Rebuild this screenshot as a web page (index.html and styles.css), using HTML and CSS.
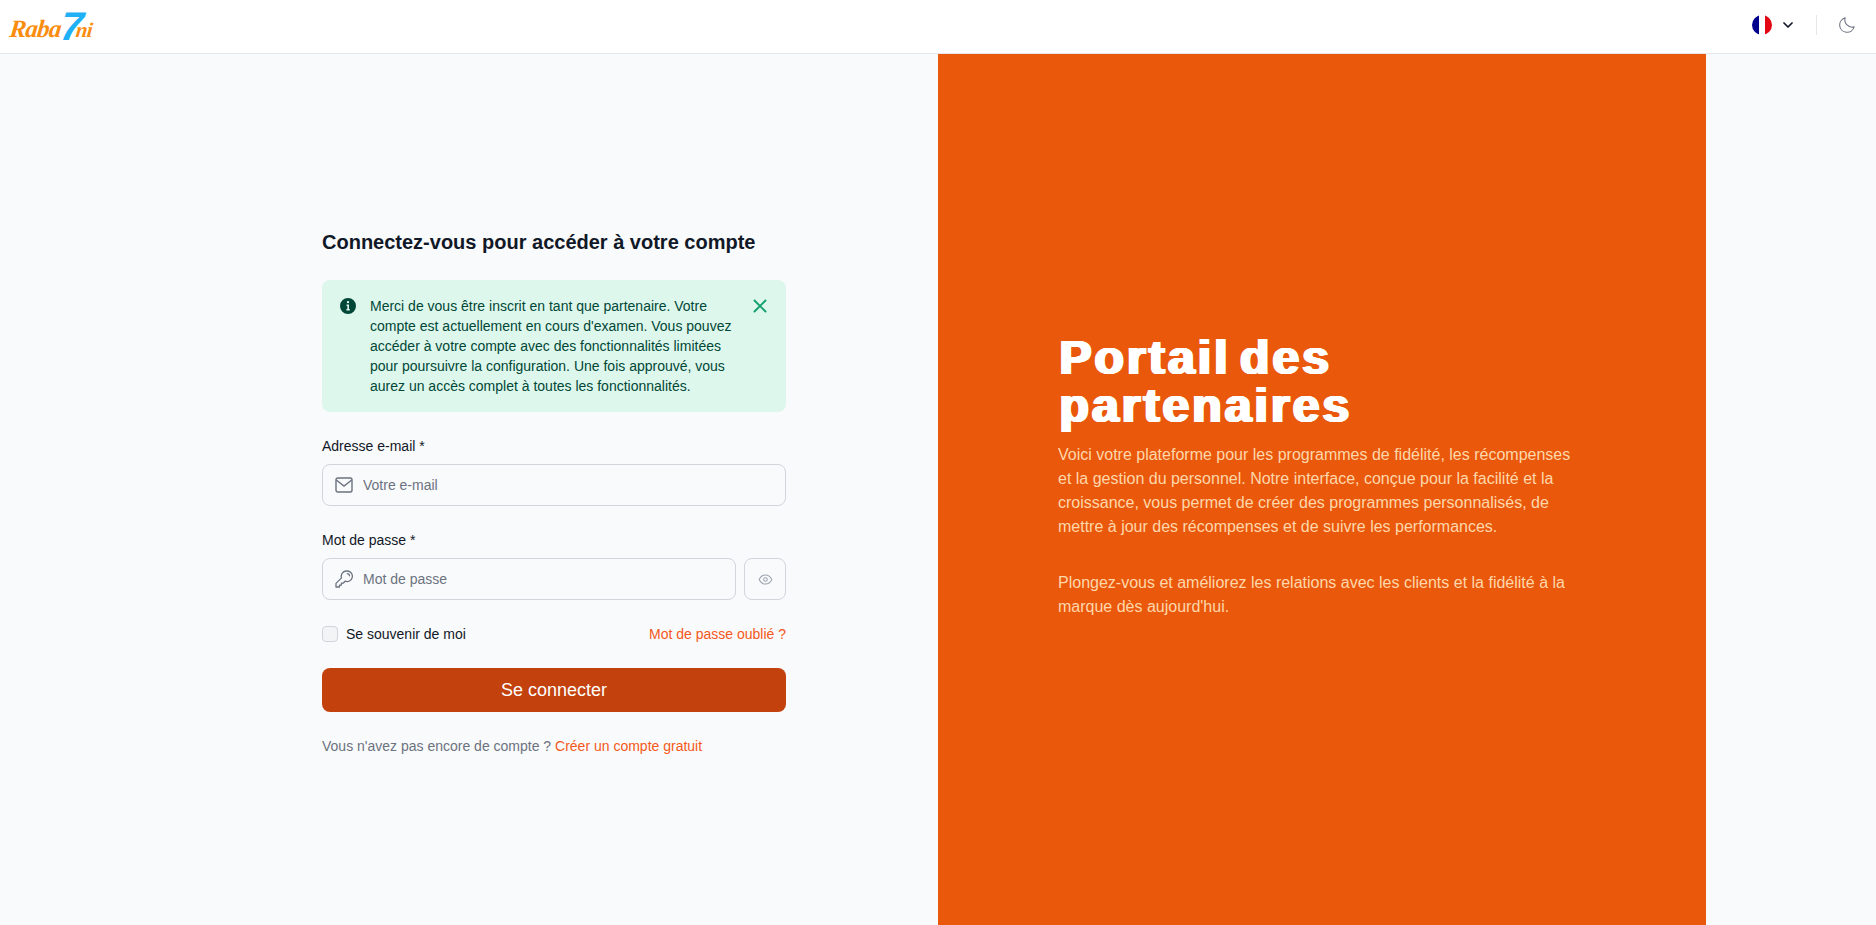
FILE: index.html
```html
<!DOCTYPE html>
<html lang="fr">
<head>
<meta charset="utf-8">
<title>Portail des partenaires</title>
<link rel="stylesheet" href="styles.css">
</head>
<body>
<header class="topbar">
  <a class="logo" href="#"><span class="logo-word">Raba</span><span class="logo-seven">7</span><span class="logo-end">ni</span></a>
  <div class="top-actions">
    <button class="lang" type="button" aria-label="Langue">
      <svg class="flag" viewBox="0 0 20 20" width="20" height="20"><defs><clipPath id="fc"><circle cx="10" cy="10" r="10"/></clipPath></defs><g clip-path="url(#fc)"><rect width="7" height="20" fill="#00008f"/><rect x="7" width="6" height="20" fill="#fff"/><rect x="13" width="7" height="20" fill="#e30613"/></g></svg>
      <svg class="chev" viewBox="0 0 10 6" width="10" height="6"><path d="M1 1l4 4 4-4" fill="none" stroke="#111827" stroke-width="1.7" stroke-linecap="round" stroke-linejoin="round"/></svg>
    </button>
    <span class="divider"></span>
    <svg class="moon" viewBox="0 0 24 24" width="18" height="18"><path d="M21.500 14.500A9.800 9.800 0 0 1 9.500 2.500a9.800 9.800 0 1 0 12 12z" fill="none" stroke="#6b7280" stroke-width="1.400" stroke-linejoin="round"/></svg>
  </div>
</header>
<main class="layout">
  <section class="login">
    <form class="form">
      <h1 class="form-title">Connectez-vous pour accéder à votre compte</h1>
      <div class="alert">
        <svg class="alert-icon" viewBox="0 0 20 20" width="16" height="16"><path fill="#014737" d="M10 0a10 10 0 1 0 0 20 10 10 0 0 0 0-20zM10 3.600a1.500 1.500 0 1 1 0 3 1.500 1.500 0 0 1 0-3zM12.200 15.600H8v-1.700h1.200v-4H8.200V8.200h3v5.700h1z"/></svg>
        <p class="alert-text">Merci de vous être inscrit en tant que partenaire. Votre compte est actuellement en cours d'examen. Vous pouvez accéder à votre compte avec des fonctionnalités limitées pour poursuivre la configuration. Une fois approuvé, vous aurez un accès complet à toutes les fonctionnalités.</p>
        <svg class="alert-close" viewBox="0 0 14 14" width="14" height="14"><path d="M1.500 1.500l11 11M12.500 1.500l-11 11" fill="none" stroke="#0e9f6e" stroke-width="1.900" stroke-linecap="round"/></svg>
      </div>
      <label class="label" for="email">Adresse e-mail *</label>
      <div class="field">
        <svg class="field-icon" viewBox="0 0 18 16" width="18" height="16"><rect x="1" y="1" width="16" height="14" rx="1.800" fill="none" stroke="#6b7280" stroke-width="1.400"/><path d="M1.300 3L9 9l7.700-6" fill="none" stroke="#6b7280" stroke-width="1.400"/></svg>
        <input class="input" id="email" type="text" placeholder="Votre e-mail">
      </div>
      <label class="label label-pass" for="pass">Mot de passe *</label>
      <div class="pass-row">
        <div class="field field-grow">
          <svg class="field-icon" viewBox="0 0 18 18" width="18" height="18"><path d="M11.600 1a5.300 5.300 0 0 0-5.100 6.900L1 13.400V17h3.500v-1.900h1.900v-1.900h1.800l1.900-2a5.300 5.300 0 1 0 2.500-10.200z" fill="none" stroke="#6b7280" stroke-width="1.300" stroke-linejoin="round"/><path d="M12.300 3.600a2.200 2.200 0 0 1 2.200 2.200" fill="none" stroke="#6b7280" stroke-width="1.300" stroke-linecap="round"/></svg>
          <input class="input" id="pass" type="password" placeholder="Mot de passe">
        </div>
        <button class="eye" type="button" aria-label="Afficher">
          <svg viewBox="0 0 16 12" width="15" height="11"><path d="M1 6s2.600-5 7-5 7 5 7 5-2.600 5-7 5-7-5-7-5z" fill="none" stroke="#9ca3af" stroke-width="1.100"/><circle cx="8" cy="6" r="2" fill="none" stroke="#9ca3af" stroke-width="1.100"/></svg>
        </button>
      </div>
      <div class="options">
        <label class="remember"><span class="check"></span>Se souvenir de moi</label>
        <a class="link" href="#">Mot de passe oublié ?</a>
      </div>
      <button class="submit" type="button">Se connecter</button>
      <p class="signup">Vous n'avez pas encore de compte ? <a class="link" href="#">Créer un compte gratuit</a></p>
    </form>
  </section>
  <section class="promo">
    <h2 class="promo-title">Portail des partenaires</h2>
    <p class="promo-text">Voici votre plateforme pour les programmes de fidélité, les récompenses et la gestion du personnel. Notre interface, conçue pour la facilité et la croissance, vous permet de créer des programmes personnalisés, de mettre à jour des récompenses et de suivre les performances.</p>
    <p class="promo-text">Plongez-vous et améliorez les relations avec les clients et la fidélité à la marque dès aujourd'hui.</p>
  </section>
</main>
</body>
</html>
```
FILE: styles.css
```css
* { box-sizing: border-box; }
html, body { height: 100%; }
body {
  margin: 0;
  background: #f9fafb;
  color: #111827;
  font-family: "Liberation Sans", Arial, sans-serif;
  display: flex;
  flex-direction: column;
  overflow: hidden;
}
.topbar {
  height: 54px;
  flex: none;
  background: #fff;
  border-bottom: 1px solid #e5e7eb;
  display: flex;
  align-items: center;
  justify-content: space-between;
  padding: 0 20px 0 10px;
}
.logo {
  display: flex;
  align-items: baseline;
  text-decoration: none;
  transform: skewX(-6deg);
  font-family: "Liberation Serif", serif;
  font-style: italic;
  font-weight: 700;
  line-height: 1;
}
.logo-word { color: #fb8c0e; font-size: 25px; letter-spacing: -0.8px; }
.logo-end { color: #fb8c0e; font-size: 21px; letter-spacing: -0.6px; margin-left: -7px; }
.logo-seven {
  color: #1fb0f5;
  font-size: 40px;
  margin-top: -8px;
  font-family: "Liberation Sans", sans-serif;
  transform: translateY(3px);
}
.top-actions { display: flex; align-items: center; padding-bottom: 3px; }
.lang {
  display: flex;
  align-items: center;
  gap: 11px;
  padding: 0;
  border: 0;
  background: none;
}
.flag, .chev, .moon, .alert-icon, .alert-close, .field-icon { display: block; flex: none; }
.divider { width: 1px; height: 20px; background: #e5e7eb; margin: 0 21px 0 23px; }
.layout {
  flex: 1;
  width: 100%;
  max-width: 1536px;
  margin: 0 auto;
  display: grid;
  grid-template-columns: 1fr 1fr;
  min-height: 0;
}
.login { display: flex; align-items: center; justify-content: center; padding-top: 5px; }
.form { width: 464px; }
.form-title {
  margin: 0 0 24px;
  font-size: 20px;
  line-height: 28px;
  font-weight: 700;
}
.alert {
  display: flex;
  align-items: flex-start;
  background: #def7ec;
  border-radius: 8px;
  padding: 16px 18px;
  height: 132px;
  margin-bottom: 24px;
}
.alert-icon { margin-top: 2px; }
.alert-text {
  margin: 0 0 0 14px;
  width: 368px;
  flex: none;
  font-size: 14px;
  line-height: 20px;
  color: #014737;
}
.alert-close { margin: 3px 1px 0 auto; }
.label {
  display: block;
  font-size: 14px;
  line-height: 20px;
  margin-bottom: 8px;
}
.label-pass { margin-top: 24px; }
.field {
  display: flex;
  align-items: center;
  gap: 10px;
  height: 42px;
  padding: 0 12px;
  background: #f9fafb;
  border: 1px solid #d1d5db;
  border-radius: 8px;
}
.input {
  flex: 1;
  min-width: 0;
  border: 0;
  outline: 0;
  padding: 0;
  background: none;
  font: 14px "Liberation Sans", Arial, sans-serif;
  color: #111827;
}
.input::placeholder { color: #6b7280; opacity: 1; }
.pass-row { display: flex; gap: 8px; }
.field-grow { flex: 1; }
.eye {
  width: 42px;
  height: 42px;
  flex: none;
  display: flex;
  align-items: center;
  justify-content: center;
  padding: 0;
  background: none;
  border: 1px solid #d1d5db;
  border-radius: 8px;
}
.options {
  display: flex;
  justify-content: space-between;
  align-items: center;
  margin-top: 24px;
  height: 20px;
  font-size: 14px;
}
.remember { display: flex; align-items: center; gap: 8px; }
.check {
  width: 16px;
  height: 16px;
  background: #f3f4f6;
  border: 1px solid #d1d5db;
  border-radius: 4px;
}
.link { color: #f4581a; text-decoration: none; }
.submit {
  display: block;
  width: 100%;
  height: 44px;
  margin-top: 24px;
  border: 0;
  border-radius: 8px;
  background: #c2410c;
  color: #fff;
  font: 18px "Liberation Sans", Arial, sans-serif;
}
.signup {
  margin: 24px 0 0;
  font-size: 14px;
  line-height: 20px;
  color: #6b7280;
}
.promo {
  background: #ea580c;
  padding: 0 120px 26px;
  display: flex;
  flex-direction: column;
  justify-content: center;
}
.promo-title {
  margin: 0 0 13px 1.5px;
  font-size: 48px;
  line-height: 48px;
  font-weight: 800;
  letter-spacing: 3.1px;
  word-spacing: -7px;
  color: #fff;
  text-shadow: 1.5px 0 0 #fff, -1.5px 0 0 #fff, 0.75px 0 0 #fff, -0.75px 0 0 #fff, 0 0.4px 0 #fff, 0 -0.4px 0 #fff;
}
.promo-text {
  margin: 0 0 32px;
  font-size: 16px;
  line-height: 24px;
  color: #fed7aa;
}
.promo-text:last-child { margin-bottom: 0; }
```
